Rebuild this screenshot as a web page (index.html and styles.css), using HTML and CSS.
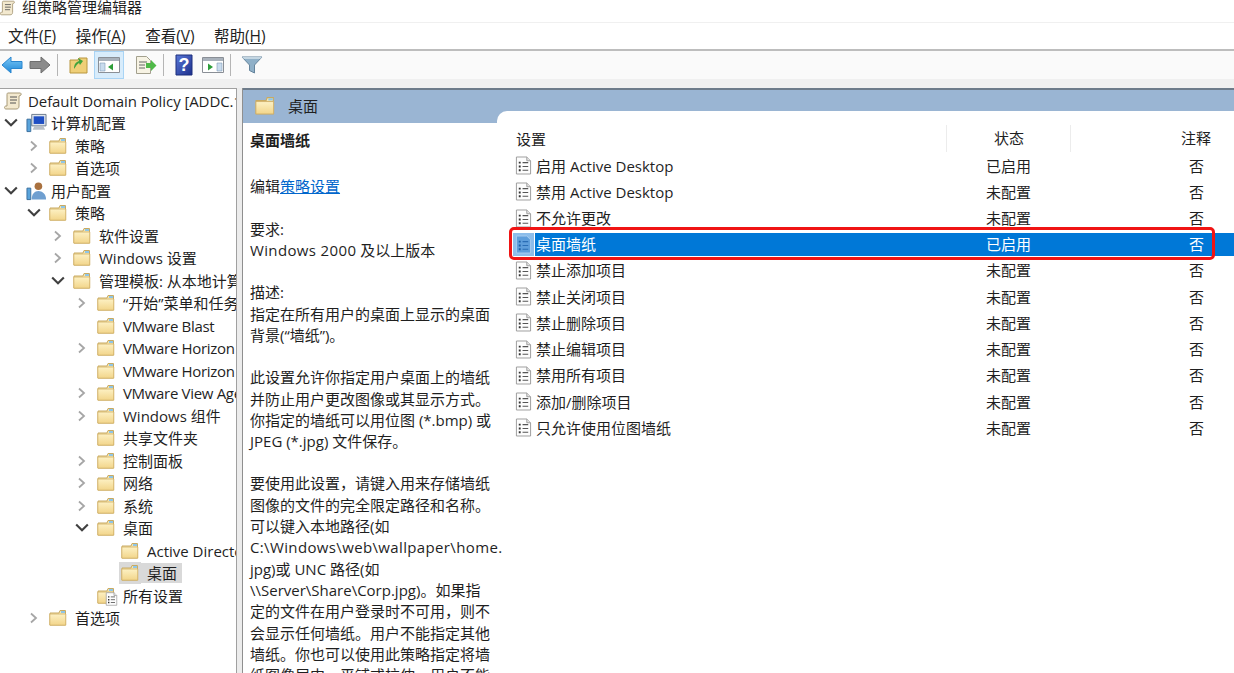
FILE: index.html
```html
<!DOCTYPE html>
<html lang="zh-CN">
<head>
<meta charset="utf-8">
<title>组策略管理编辑器</title>
<link rel="stylesheet" href="styles.css">
</head>
<body>
<svg class="defs" width="0" height="0" aria-hidden="true">
  <defs>
    <linearGradient id="fg" x1="0" y1="0" x2="0" y2="1"><stop offset="0" stop-color="#fdf1c4"/><stop offset="1" stop-color="#f2d58a"/></linearGradient>
    <linearGradient id="bl" x1="0" y1="0" x2="0" y2="1"><stop offset="0" stop-color="#7cc8f5"/><stop offset="1" stop-color="#1c86d8"/></linearGradient>
    <linearGradient id="hp" x1="0" y1="0" x2="1" y2="1"><stop offset="0" stop-color="#5a78d8"/><stop offset="1" stop-color="#1c2f8c"/></linearGradient>
    <symbol id="folder" viewBox="0 0 18 18">
      <path d="M1 4h9l1-2.500h5.500V16H1z" fill="#f7e7b0" stroke="#c9aa62"/>
      <path d="M12 2h4v2h-4z" fill="#8ec6e8"/>
      <path d="M.8 5h16v11.200H.8z" fill="url(#fg)" stroke="#cfae66" stroke-width=".8"/>
    </symbol>
    <symbol id="doc" viewBox="0 0 18 20">
      <path d="M1.500 1h11l4 4v14h-15z" fill="#fdfdfd" stroke="#9a9a9a"/>
      <path d="M12.500 1v4h4" fill="#e4e4e4" stroke="#9a9a9a"/>
      <path d="M4 6h2v2H4zM4 10h2v2H4zM4 14h2v2H4z" fill="#333"/>
      <path d="M8 7h6M8 11h6M8 15h6" stroke="#555" stroke-width="1.200"/>
    </symbol>
    <symbol id="docsel" viewBox="0 0 18 20">
      <path d="M1.500 1h11l4 4v14h-15z" fill="#5f9edb" stroke="#a9cdf0"/>
      <path d="M4 6h2v2H4zM4 10h2v2H4zM4 14h2v2H4z" fill="#1d5fa6"/>
      <path d="M8 7h6M8 11h6M8 15h6" stroke="#2a6db5" stroke-width="1.200"/>
    </symbol>
    <symbol id="scroll" viewBox="0 0 20 20">
      <path d="M5 2h12c1 0 1.500 1 1 2l-2 1v10c0 2-1 3-3 3H3c-2 0-2-3 0-3h1V4c0-1 0-2 1-2z" fill="#f3e9cf" stroke="#a89a78"/>
      <path d="M7 6h7M7 9h7M7 12h6" stroke="#555"/>
    </symbol>
    <symbol id="computer" viewBox="0 0 22 20">
      <path d="M6 1h15v12H6z" fill="#dfe5ec" stroke="#6a7a8c"/>
      <path d="M8 3h11v8H8z" fill="#1f4fc4"/>
      <path d="M9 13h9l2 4H7z" fill="#b9c0c8"/>
      <path d="M1 6h4v13H1z" fill="#59a4dc" stroke="#3a6e9c"/>
    </symbol>
    <symbol id="user" viewBox="0 0 22 20">
      <circle cx="13" cy="5" r="4" fill="#a9713f"/>
      <path d="M6 19c0-6 3-9 7-9s8 3 8 9z" fill="#6f9fd0"/>
      <path d="M1 7h4v12H1z" fill="#59a4dc" stroke="#3a6e9c"/>
    </symbol>
    <symbol id="chev-r" viewBox="0 0 10 12"><path d="M2 1.500l5 4.500-5 4.500" fill="none" stroke="#a6a6a6" stroke-width="1.800"/></symbol>
    <symbol id="chev-d" viewBox="0 0 12 10"><path d="M1 2l5 5 5-5" fill="none" stroke="#404040" stroke-width="1.800"/></symbol>
  </defs>
</svg>

<header class="titlebar">
  <svg class="ti-scroll"><use href="#scroll"/></svg>
  <span>组策略管理编辑器</span>
</header>

<nav class="menubar">
  <span>文件(<u>F</u>)</span>
  <span>操作(<u>A</u>)</span>
  <span>查看(<u>V</u>)</span>
  <span>帮助(<u>H</u>)</span>
</nav>

<div class="toolbar">
  <button class="tool"><svg width="22" height="20" viewBox="0 0 22 20"><path d="M1 10l9-8v4.500h11v7H10V18z" fill="url(#bl)" stroke="#2a86cf"/></svg></button>
  <button class="tool"><svg width="22" height="20" viewBox="0 0 22 20"><path d="M21 10l-9-8v4.500H1v7h11V18z" fill="#8b8b8b" stroke="#6f6f6f"/></svg></button>
  <i class="sep"></i>
  <button class="tool"><svg width="20" height="20" viewBox="0 0 20 20"><path d="M1 5h8l1-2h8v15H1z" fill="#efcf78" stroke="#b8963f"/><path d="M5 14c0-5 2-7 5-8l-1-3 5 3-3 4-1-2c-2 1-3 3-5 6z" fill="#43a43c"/></svg></button>
  <button class="tool on"><svg width="22" height="18" viewBox="0 0 22 18"><path d="M.5 1.500h21v15H.5z" fill="#fff" stroke="#8a8f96"/><path d="M1 2h20v3H1z" fill="#a9b2bc"/><path d="M2 7h5v8H2z" fill="#c9dcee" stroke="#7f9ab5" stroke-width=".6"/><path d="M15 7.500v7l-5-3.500z" fill="#2e9e3a"/></svg></button>
  <i class="sep ghost"></i>
  <button class="tool"><svg width="22" height="20" viewBox="0 0 22 20"><path d="M1.500 1.500h10l4 4v13h-14z" fill="#f7f3e4" stroke="#a3a08e"/><path d="M4 7h8M4 10h6M4 13h6" stroke="#666"/><path d="M11 8h5V5l5.500 5.500-5.500 5.500v-3h-5z" fill="#4fb848"/></svg></button>
  <i class="sep"></i>
  <button class="tool"><svg width="20" height="22" viewBox="0 0 20 22"><path d="M1 1h16v20H1z" fill="url(#hp)" stroke="#1c2f7c"/><text x="9" y="17" class="help-q">?</text></svg></button>
  <button class="tool"><svg width="22" height="18" viewBox="0 0 22 18"><path d="M.5 1.500h21v15H.5z" fill="#fff" stroke="#8a8f96"/><path d="M1 2h20v3H1z" fill="#a9b2bc"/><path d="M15 7h5v8h-5z" fill="#c9dcee" stroke="#7f9ab5" stroke-width=".6"/><path d="M6 7.500v7l5-3.500z" fill="#2e9e3a"/></svg></button>
  <i class="sep"></i>
  <button class="tool"><svg width="22" height="20" viewBox="0 0 22 20"><path d="M1 2h20l-7.500 8v8l-5-2.500V10z" fill="#8fb0c8" stroke="#65849c"/><path d="M1 2h20l-2 2H3z" fill="#c4d6e2"/></svg></button>
</div>

<main class="workspace">
  <aside class="tree">
    <div class="node root"><svg class="ic-root"><use href="#scroll"/></svg><span>Default Domain Policy [ADDC.1.local] 策略</span></div>
    <div class="node l0"><svg class="chev"><use href="#chev-d"/></svg><svg class="ic-big"><use href="#computer"/></svg><span>计算机配置</span></div>
    <div class="node l1"><svg class="chev"><use href="#chev-r"/></svg><svg class="ic"><use href="#folder"/></svg><span>策略</span></div>
    <div class="node l1"><svg class="chev"><use href="#chev-r"/></svg><svg class="ic"><use href="#folder"/></svg><span>首选项</span></div>
    <div class="node l0"><svg class="chev"><use href="#chev-d"/></svg><svg class="ic-big"><use href="#user"/></svg><span>用户配置</span></div>
    <div class="node l1"><svg class="chev"><use href="#chev-d"/></svg><svg class="ic"><use href="#folder"/></svg><span>策略</span></div>
    <div class="node l2"><svg class="chev"><use href="#chev-r"/></svg><svg class="ic"><use href="#folder"/></svg><span>软件设置</span></div>
    <div class="node l2"><svg class="chev"><use href="#chev-r"/></svg><svg class="ic"><use href="#folder"/></svg><span>Windows 设置</span></div>
    <div class="node l2"><svg class="chev"><use href="#chev-d"/></svg><svg class="ic"><use href="#folder"/></svg><span>管理模板: 从本地计算机获取</span></div>
    <div class="node l3"><svg class="chev"><use href="#chev-r"/></svg><svg class="ic"><use href="#folder"/></svg><span>“开始”菜单和任务栏</span></div>
    <div class="node l3"><i class="chev"></i><svg class="ic"><use href="#folder"/></svg><span class="en">VMware Blast</span></div>
    <div class="node l3"><svg class="chev"><use href="#chev-r"/></svg><svg class="ic"><use href="#folder"/></svg><span class="en">VMware Horizon Client</span></div>
    <div class="node l3"><i class="chev"></i><svg class="ic"><use href="#folder"/></svg><span class="en">VMware Horizon URL</span></div>
    <div class="node l3"><svg class="chev"><use href="#chev-r"/></svg><svg class="ic"><use href="#folder"/></svg><span class="en">VMware View Agent</span></div>
    <div class="node l3"><svg class="chev"><use href="#chev-r"/></svg><svg class="ic"><use href="#folder"/></svg><span>Windows 组件</span></div>
    <div class="node l3"><i class="chev"></i><svg class="ic"><use href="#folder"/></svg><span>共享文件夹</span></div>
    <div class="node l3"><svg class="chev"><use href="#chev-r"/></svg><svg class="ic"><use href="#folder"/></svg><span>控制面板</span></div>
    <div class="node l3"><svg class="chev"><use href="#chev-r"/></svg><svg class="ic"><use href="#folder"/></svg><span>网络</span></div>
    <div class="node l3"><svg class="chev"><use href="#chev-r"/></svg><svg class="ic"><use href="#folder"/></svg><span>系统</span></div>
    <div class="node l3"><svg class="chev"><use href="#chev-d"/></svg><svg class="ic"><use href="#folder"/></svg><span>桌面</span></div>
    <div class="node l4"><i class="chev"></i><svg class="ic"><use href="#folder"/></svg><span>Active Directory</span></div>
    <div class="node l4 current"><i class="chev"></i><svg class="ic"><use href="#folder"/></svg><span>桌面</span></div>
    <div class="node l3"><i class="chev"></i><span class="ic-stack"><svg class="ic"><use href="#folder"/></svg><svg class="ic-over"><use href="#doc"/></svg></span><span>所有设置</span></div>
    <div class="node l1"><svg class="chev"><use href="#chev-r"/></svg><svg class="ic"><use href="#folder"/></svg><span>首选项</span></div>
  </aside>

  <div class="splitter"></div>

  <section class="detail">
    <div class="band"><svg class="band-ic"><use href="#folder"/></svg><span>桌面</span></div>
    <div class="panes">
      <article class="desc">
        <p class="desc-title">桌面墙纸</p>
        <p>编辑<a href="#">策略设置</a></p>
        <p>要求:<br><span class="path">Windows 2000</span> 及以上版本</p>
        <p>描述:<br>指定在所有用户的桌面上显示的桌面<br>背景(“墙纸”)。</p>
        <p>此设置允许你指定用户桌面上的墙纸<br>并防止用户更改图像或其显示方式。<br>你指定的墙纸可以用位图 (*.bmp) 或<br>JPEG (*.jpg) 文件保存。</p>
        <p>要使用此设置，请键入用来存储墙纸<br>图像的文件的完全限定路径和名称。<br>可以键入本地路径(如<br><span class="path">C:\Windows\web\wallpaper\home.</span><br>jpg)或 UNC 路径(如<br>\\Server\Share\Corp.jpg)。如果指<br>定的文件在用户登录时不可用，则不<br>会显示任何墙纸。用户不能指定其他<br>墙纸。你也可以使用此策略指定将墙<br>纸图像居中、平铺或拉伸。用户不能</p>
      </article>
      <div class="list">
        <div class="row head"><span class="c1">设置</span><span class="c2">状态</span><span class="c3">注释</span></div>
        <div class="row"><span class="c1"><svg class="doc"><use href="#doc"/></svg><b>启用 Active Desktop</b></span><span class="c2">已启用</span><span class="c3">否</span></div>
        <div class="row"><span class="c1"><svg class="doc"><use href="#doc"/></svg><b>禁用 Active Desktop</b></span><span class="c2">未配置</span><span class="c3">否</span></div>
        <div class="row"><span class="c1"><svg class="doc"><use href="#doc"/></svg><b>不允许更改</b></span><span class="c2">未配置</span><span class="c3">否</span></div>
        <div class="row selected"><span class="c1"><svg class="doc"><use href="#docsel"/></svg><b>桌面墙纸</b></span><span class="c2">已启用</span><span class="c3">否</span><i class="mark"></i></div>
        <div class="row"><span class="c1"><svg class="doc"><use href="#doc"/></svg><b>禁止添加项目</b></span><span class="c2">未配置</span><span class="c3">否</span></div>
        <div class="row"><span class="c1"><svg class="doc"><use href="#doc"/></svg><b>禁止关闭项目</b></span><span class="c2">未配置</span><span class="c3">否</span></div>
        <div class="row"><span class="c1"><svg class="doc"><use href="#doc"/></svg><b>禁止删除项目</b></span><span class="c2">未配置</span><span class="c3">否</span></div>
        <div class="row"><span class="c1"><svg class="doc"><use href="#doc"/></svg><b>禁止编辑项目</b></span><span class="c2">未配置</span><span class="c3">否</span></div>
        <div class="row"><span class="c1"><svg class="doc"><use href="#doc"/></svg><b>禁用所有项目</b></span><span class="c2">未配置</span><span class="c3">否</span></div>
        <div class="row"><span class="c1"><svg class="doc"><use href="#doc"/></svg><b>添加/删除项目</b></span><span class="c2">未配置</span><span class="c3">否</span></div>
        <div class="row"><span class="c1"><svg class="doc"><use href="#doc"/></svg><b>只允许使用位图墙纸</b></span><span class="c2">未配置</span><span class="c3">否</span></div>
      </div>
    </div>
  </section>
</main>
</body>
</html>
```

FILE: styles.css
```css
* { box-sizing: border-box; }
html, body { margin: 0; height: 100%; }
body {
  width: 1234px;
  height: 673px;
  overflow: hidden;
  display: flex;
  flex-direction: column;
  background: #f0f0f0;
  color: #1f1f1f;
  font: 15px/1.2 "Open Sans", "Noto Sans CJK SC", "Noto Sans", sans-serif;
}
.defs { position: absolute; }

.titlebar {
  height: 22px;
  flex: none;
  display: flex;
  align-items: center;
  gap: 6px;
  background: #fff;
  overflow: hidden;
}
.ti-scroll { width: 17px; height: 20px; margin: -6px 0 0 -1px; }
.titlebar span { font-size: 15px; margin-top: -8px; }

.menubar {
  height: 29px;
  flex: none;
  display: flex;
  align-items: center;
  padding-left: 8px;
  gap: 19.500px;
  background: #fff;
  border-top: 1px solid #f0f0f0;
  border-bottom: 2px solid #bdbdbd;
  font-size: 15.500px;
}

.toolbar {
  height: 28px;
  flex: none;
  display: flex;
  align-items: center;
  margin-left: -2px;
  background: #fafafa;
}
.tool {
  width: 28px;
  height: 28px;
  flex: none;
  padding: 0;
  border: 1px solid transparent;
  background: none;
  display: flex;
  align-items: center;
  justify-content: center;
}
.tool.on { width: 30px; margin-left: 1px; background: #d8ecfb; border-color: #a9d4f5; }
.sep { width: 1px; height: 22px; margin: 0 7px 0 3px; background: #b5b5b5; flex: none; }
.sep.ghost { width: 8px; margin: 0; background: transparent; }
.help-q { font: bold 18px "Liberation Sans", sans-serif; fill: #fff; text-anchor: middle; }

.workspace {
  margin-top: 9px;
  flex: 1;
  min-height: 0;
  display: flex;
}

.tree {
  width: 236px;
  flex: none;
  padding-top: .4px;
  background: #fff;
  border-top: 1px solid #a0a0a0;
  overflow: hidden;
}
.node {
  height: 22.500px;
  display: flex;
  align-items: center;
  white-space: nowrap;
  font-size: 15px;
}
.node span { flex: none; }
.root span { letter-spacing: -.08px; }
.node .en { letter-spacing: -.32px; }
.chev { width: 14px; height: 12px; flex: none; margin-right: 8px; display: block; }
.ic { width: 18px; height: 18px; flex: none; margin-right: 8px; }
.ic-big { width: 21px; height: 20px; flex: none; margin-right: 4px; }
.ic-root { width: 20px; height: 20px; flex: none; margin-right: 5px; }
.root { padding-left: 3px; }
.l0 { padding-left: 4px; }
.l1 { padding-left: 27px; }
.l2 { padding-left: 51px; }
.l3 { padding-left: 75px; }
.l4 { padding-left: 99px; }
.current span { background: #d9d9d9; padding: 1px 5px 1px 8px; }
.current .ic { margin-right: 0; background: #d9d9d9; outline: 2px solid #d9d9d9; }
.ic-stack { display: flex; position: relative; }
.ic-over { position: absolute; left: 8px; top: 5px; width: 13px; height: 14px; }

.splitter {
  width: 7px;
  flex: none;
  background: #ececec;
  border-left: 1px solid #a0a0a0;
  border-right: 1px solid #8f8f8f;
}

.detail {
  flex: 1;
  min-width: 0;
  display: flex;
  flex-direction: column;
  background: #fff;
}
.band {
  height: 35px;
  flex: none;
  display: flex;
  align-items: flex-start;
  gap: 13px;
  padding: 6px 0 0 12px;
  background: #9ab5d3;
  border-top: 2px solid #6d7b8a;
}
.band span { margin-top: 1px; }
.band-ic { width: 20px; height: 20px; }

.panes { flex: 1; min-height: 0; display: flex; }

.desc {
  width: 254px;
  flex: none;
  position: relative;
  z-index: 1;
  padding: 7px 0 0 7px;
  line-height: 21.300px;
  white-space: nowrap;
}
.desc p { margin: 0 0 21px; }
.desc .desc-title { font-weight: 700; margin-bottom: 25.200px; }
.desc a { color: #0066cc; text-decoration: underline; }
.path { letter-spacing: .36px; }

.list {
  flex: 1;
  min-width: 0;
  margin-top: -12px;
  position: relative;
  background: #fff;
  border-top-left-radius: 10px;
  padding-top: 14px;
}
.row {
  position: relative;
  display: grid;
  grid-template-columns: 449px 124px 1fr;
  height: 26.220px;
  align-items: center;
}
.row b { font-weight: 400; }
.c1 { display: flex; align-items: center; padding-left: 18px; gap: 4px; white-space: nowrap; }
.c2 { padding-left: 40px; }
.c3 { padding-left: 119px; }
.head { height: 27.500px; }
.head .c1 { padding-left: 19px; }
.head .c2 { padding-left: 47px; border-left: 1px solid #ececec; line-height: 27px; }
.head .c3 { padding-left: 110px; border-left: 1px solid #ececec; line-height: 27px; }
.doc { width: 17px; height: 19px; flex: none; }
.selected { color: #fff; background: linear-gradient(#0078d7, #0078d7) 38px 2px / 100% 23px no-repeat; }
.selected .doc { background: #8dbdea; outline: 2px solid #8dbdea; outline-offset: 0; }
.mark {
  position: absolute;
  left: 12px;
  top: -4px;
  width: 706px;
  height: 33px;
  border: 3px solid #f01414;
  border-radius: 5px;
  pointer-events: none;
}
```
